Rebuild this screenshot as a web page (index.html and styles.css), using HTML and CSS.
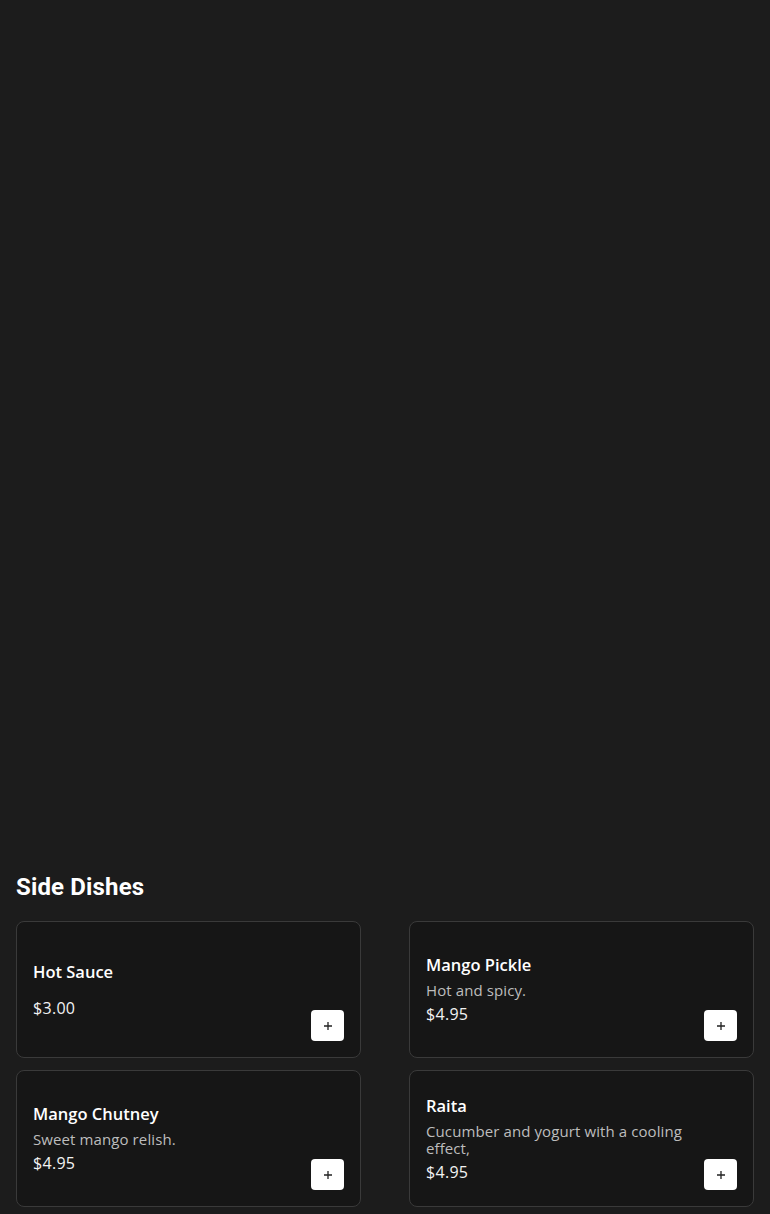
FILE: index.html
```html
<!DOCTYPE html>
<html lang="en">
<head>
  <meta charset="UTF-8" />
  <title>Menu</title>
  <link rel="stylesheet" href="styles.css">
</head>
<body>
  <div id="page">
    <div class="hero"></div>

    <section class="menu-section">
      <h2>Side Dishes</h2>
      <div class="item-grid">
        <div class="item-card">
          <div class="item-info">
            <h3>Hot Sauce</h3>
            <p class="empty"></p>
            <div class="price">$3.00</div>
          </div>
          <button class="add-btn" aria-label="Add">
            <svg viewBox="0 0 12 12" width="12" height="12"><path d="M6 2v8M2 6h8" stroke="#222" stroke-width="1.3" fill="none"/></svg>
          </button>
        </div>
        <div class="item-card">
          <div class="item-info">
            <h3>Mango Pickle</h3>
            <p>Hot and spicy.</p>
            <div class="price">$4.95</div>
          </div>
          <button class="add-btn" aria-label="Add">
            <svg viewBox="0 0 12 12" width="12" height="12"><path d="M6 2v8M2 6h8" stroke="#222" stroke-width="1.3" fill="none"/></svg>
          </button>
        </div>
        <div class="item-card">
          <div class="item-info">
            <h3>Mango Chutney</h3>
            <p>Sweet mango relish.</p>
            <div class="price">$4.95</div>
          </div>
          <button class="add-btn" aria-label="Add">
            <svg viewBox="0 0 12 12" width="12" height="12"><path d="M6 2v8M2 6h8" stroke="#222" stroke-width="1.3" fill="none"/></svg>
          </button>
        </div>
        <div class="item-card">
          <div class="item-info">
            <h3>Raita</h3>
            <p>Cucumber and yogurt with a cooling effect,</p>
            <div class="price">$4.95</div>
          </div>
          <button class="add-btn" aria-label="Add">
            <svg viewBox="0 0 12 12" width="12" height="12"><path d="M6 2v8M2 6h8" stroke="#222" stroke-width="1.3" fill="none"/></svg>
          </button>
        </div>
      </div>
    </section>
  </div>
</body>
</html>
```

FILE: styles.css
```css
html, body {
  margin: 0;
  padding: 0;
  background: #1c1c1c;
  color: #fff;
  font-family: 'Open Sans', sans-serif;
  overflow: hidden;
}

#page {
  min-height: 100vh;
}

.hero {
  height: 862px;
}

.menu-section {
  padding: 0 16px;
}

.menu-section h2 {
  margin: 0 0 20px;
  font-family: Roboto, sans-serif;
  font-weight: 700;
  font-size: 24px;
  letter-spacing: 0.15px;
  height: 39px;
  line-height: 50px;
}

.item-grid {
  display: grid;
  grid-template-columns: 1fr 1fr;
  column-gap: 48px;
  row-gap: 12px;
}

.item-card {
  display: flex;
  align-items: center;
  height: 137px;
  box-sizing: border-box;
  padding: 0 16px;
  background: #161616;
  border: 1px solid #3a3a3a;
  border-radius: 8px;
  position: relative;
}

.item-info {
  flex: 1;
  padding-right: 50px;
}

.item-info h3 {
  margin: 0 0 6px;
  font-size: 16.5px;
  font-weight: 600;
  line-height: 22px;
}

.item-info p {
  margin: 0 0 4px;
  font-size: 15px;
  letter-spacing: 0.1px;
  line-height: 17px;
  color: #bdbdbd;
}

.item-info p.empty {
  height: 8px;
  margin: 0;
}

.price {
  font-size: 16px;
  letter-spacing: 0.3px;
  line-height: 22px;
  color: #f2f2f2;
}

.add-btn {
  position: absolute;
  right: 16px;
  bottom: 16px;
  width: 33px;
  height: 31px;
  padding: 0;
  border: none;
  border-radius: 4px;
  background: #fff;
  display: flex;
  align-items: center;
  justify-content: center;
  cursor: pointer;
}
```
